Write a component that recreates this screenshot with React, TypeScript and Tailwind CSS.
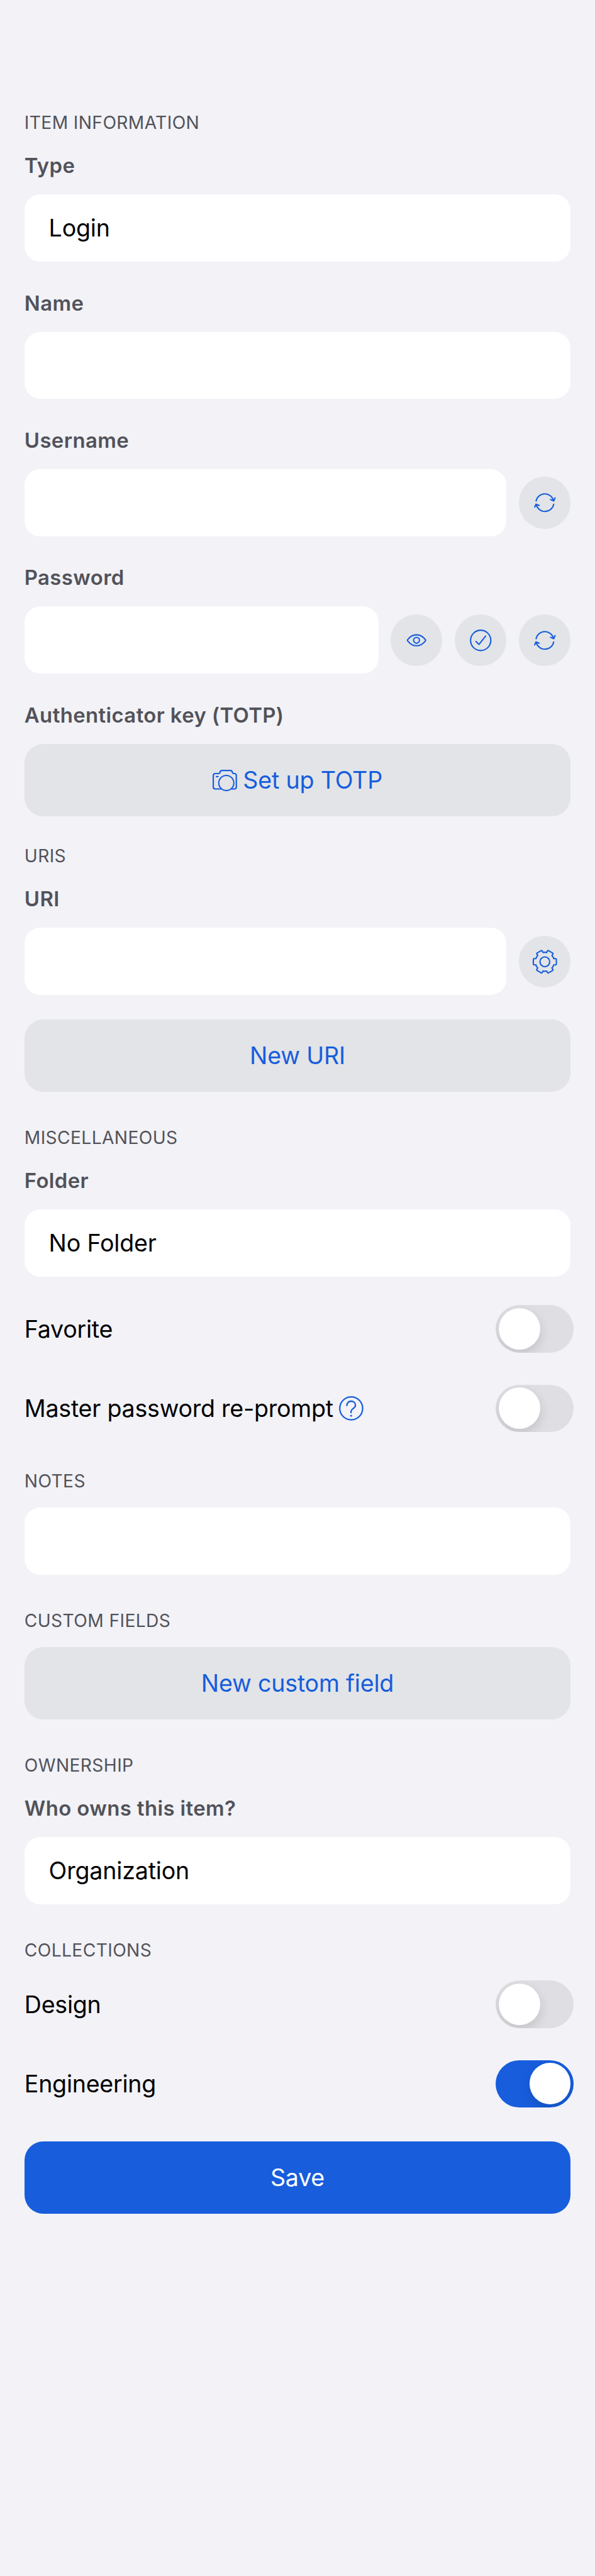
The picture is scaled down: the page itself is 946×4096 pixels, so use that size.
import type { ReactNode } from "react";

function SectionHeader({ children, className = "" }: { children: ReactNode; className?: string }) {
  return (
    <h2
      className={`flex h-[32.4px] items-center pt-[2px] text-[28.2px] leading-none font-normal tracking-[0.38px] text-[#525259] uppercase ${className}`}
    >
      {children}
    </h2>
  );
}

function Label({ children, className = "" }: { children: ReactNode; className?: string }) {
  return (
    <label
      className={`flex h-[40.4px] items-center pt-px text-[32.9px] leading-none font-semibold tracking-[0.38px] text-[#525259] ${className}`}
    >
      {children}
    </label>
  );
}

function Field({ value = "", actions }: { value?: string; actions?: ReactNode }) {
  return (
    <div className="flex items-center gap-[19.4px]">
      <div className="flex h-[106.8px] min-w-0 flex-1 items-center rounded-[25px] bg-white px-[38.8px] pt-px text-[37.6px] leading-none tracking-[-0.19px] text-black">
        {value}
      </div>
      {actions}
    </div>
  );
}

function RoundButton({ label, children }: { label: string; children: ReactNode }) {
  return (
    <button
      type="button"
      aria-label={label}
      className="size-[82.5px] shrink-0 rounded-full bg-[#e2e4e8] text-[#175ddc]"
    >
      <svg
        viewBox="0 0 102 102"
        className="size-full"
        fill="none"
        stroke="currentColor"
        strokeWidth="2.6"
        strokeLinecap="round"
        strokeLinejoin="round"
      >
        {children}
      </svg>
    </button>
  );
}

function GenerateIcon() {
  return (
    <>
      <path d="M33.8 47.7a17.6 17.6 0 0 1 34.3 -0.6" />
      <path d="M62.2 45l6.3 2.6l2.5-6" />
      <path d="M68.4 54.2a17.6 17.6 0 0 1-34.4 0.5" />
      <path d="M39.8 56.6l-6.2-2.6l-2.6 5.8" />
    </>
  );
}

function EyeIcon() {
  return (
    <>
      <path d="M33.6 49.6C37.5 44.6 43.7 40 51 40s13.5 4.6 17.4 9.6c.7 1 .7 1.4 0 2.4C64.5 57 58.3 61.6 51 61.6S37.5 57 33.6 52c-.7-1-.7-1.4 0-2.4Z" />
      <circle cx="51" cy="50.8" r="5.7" />
    </>
  );
}

function CheckIcon() {
  return (
    <>
      <circle cx="51" cy="51" r="19.9" />
      <path d="M41.7 53.2l6 5.7L60.7 42.5" />
    </>
  );
}

function GearIcon() {
  return (
    <>
      <circle cx="51" cy="51" r="9.5" />
      {[0, 60, 120, 180, 240, 300].map((angle) => (
        <path
          key={angle}
          transform={`rotate(${angle} 51 51)`}
          d="M68.5 44.9H71.8Q73.6 44.9 73.6 47V55Q73.6 57.1 71.8 57.1H68.5Q67.6 60.5 65.1 63.2"
        />
      ))}
    </>
  );
}

function CameraIcon() {
  return (
    <svg
      viewBox="54 66 144 126"
      className="h-[34px] w-[38.8px] shrink-0"
      fill="none"
      stroke="currentColor"
      strokeWidth="8"
      strokeLinecap="round"
      strokeLinejoin="round"
    >
      <path d="M104 179H70q-12 0-12-12V100q0-12 12-12H88q9 0 10.5-9q1.500-9 11-9H159q9 0 11 9q2 9 9 9h3q12 0 12 12V167q0 12-12 12H166" />
      <circle cx="135" cy="144" r="44.5" strokeWidth="7.5" />
      <path d="M76 106H86" />
    </svg>
  );
}

function HelpIcon() {
  return (
    <svg
      viewBox="0 0 48 48"
      className="size-[38.8px] shrink-0 text-[#175ddc]"
      fill="none"
      stroke="currentColor"
      strokeWidth="2.8"
      strokeLinecap="round"
      strokeLinejoin="round"
    >
      <circle cx="24" cy="24" r="22.5" />
      <path d="M15.5 18.5c0-5.2 3.5-8.6 8.4-8.6c4.8 0 8.4 3.3 8.4 7.6c0 7-8.6 6.5-8.600 13v2" />
      <circle cx="23.7" cy="38.7" r="1.8" fill="currentColor" stroke="none" />
    </svg>
  );
}

function WideButton({
  children,
  primary = false,
  className = "",
}: {
  children: ReactNode;
  primary?: boolean;
  className?: string;
}) {
  return (
    <button
      type="button"
      className={`flex h-[114.8px] w-full items-center justify-center gap-[9.5px] rounded-[30px] pt-px text-[37.6px] leading-none tracking-[-0.19px] ${
        primary ? "bg-[#175ddc] text-white" : "bg-[#e2e4e8] text-[#175ddc]"
      } ${className}`}
    >
      {children}
    </button>
  );
}

function ToggleRow({
  label,
  on = false,
  help = false,
  className = "",
}: {
  label: string;
  on?: boolean;
  help?: boolean;
  className?: string;
}) {
  return (
    <div className={`-mr-[4.9px] flex h-[75.2px] items-center justify-between ${className}`}>
      <div className="flex items-center gap-[9.5px] pt-px text-[37.6px] leading-none tracking-[-0.25px] text-black">
        <span>{label}</span>
        {help && <HelpIcon />}
      </div>
      <div
        role="switch"
        aria-checked={on}
        className={`flex h-[75.2px] w-[123.7px] items-center overflow-hidden rounded-full px-[4.9px] ${
          on ? "justify-end bg-[#175ddc]" : "justify-start bg-[#dedee3]"
        }`}
      >
        <div className="size-[65.5px] rounded-full bg-white shadow-[0_7px_18px_rgba(0,0,0,0.13)]" />
      </div>
    </div>
  );
}

export default function App() {
  return (
    <main className="flex h-[4096px] w-full flex-col bg-[#f2f2f7] px-[38.8px] pt-[177.8px] font-['Inter',sans-serif]">
      <SectionHeader>Item information</SectionHeader>
      <Label className="mt-[32.8px] mb-[25.9px]">Type</Label>
      <Field value="Login" />
      <Label className="mt-[45.3px] mb-[25.9px]">Name</Label>
      <Field />
      <Label className="mt-[45.3px] mb-[25.9px]">Username</Label>
      <Field
        actions={
          <RoundButton label="Generate username">
            <GenerateIcon />
          </RoundButton>
        }
      />
      <Label className="mt-[45.3px] mb-[25.9px]">Password</Label>
      <Field
        actions={
          <>
            <RoundButton label="Show password">
              <EyeIcon />
            </RoundButton>
            <RoundButton label="Check password">
              <CheckIcon />
            </RoundButton>
            <RoundButton label="Generate password">
              <GenerateIcon />
            </RoundButton>
          </>
        }
      />
      <Label className="mt-[45.3px] mb-[25.9px]">Authenticator key (TOTP)</Label>
      <WideButton>
        <CameraIcon />
        Set up TOTP
      </WideButton>

      <SectionHeader className="mt-[46.1px]">URIs</SectionHeader>
      <Label className="mt-[33.1px] mb-[25.9px]">URI</Label>
      <Field
        actions={
          <RoundButton label="URI options">
            <GearIcon />
          </RoundButton>
        }
      />
      <WideButton className="mt-[38.8px]">New URI</WideButton>

      <SectionHeader className="mt-[55.8px]">Miscellaneous</SectionHeader>
      <Label className="mt-[33.1px] mb-[25.9px]">Folder</Label>
      <Field value="No Folder" />
      <ToggleRow label="Favorite" className="mt-[45.3px]" />
      <ToggleRow label="Master password re-prompt" help className="mt-[50.9px]" />

      <SectionHeader className="mt-[61.5px] mb-[26.7px]">Notes</SectionHeader>
      <Field />

      <SectionHeader className="mt-[55.8px] mb-[26.7px]">Custom fields</SectionHeader>
      <WideButton>New custom field</WideButton>

      <SectionHeader className="mt-[55.8px]">Ownership</SectionHeader>
      <Label className="mt-[33.1px] mb-[25.9px]">Who owns this item?</Label>
      <Field value="Organization" />

      <SectionHeader className="mt-[55.8px]">Collections</SectionHeader>
      <ToggleRow label="Design" className="mt-[33.1px]" />
      <ToggleRow label="Engineering" on className="mt-[50.9px]" />
      <WideButton primary className="mt-[54.2px]">
        Save
      </WideButton>
    </main>
  );
}
